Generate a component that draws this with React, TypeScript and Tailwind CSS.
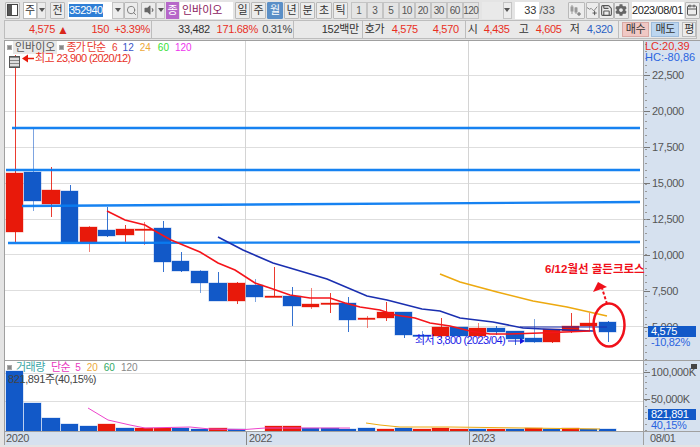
import { Calendar, Save, Search } from "lucide-react";
import { FaCog, FaVolumeDown } from "react-icons/fa";

const RED = "#e8190a";
const BLUE = "#1259c8";

// left, right, body top, body bottom, wick top, wick bottom, up?
const candles: [number, number, number, number, number, number, boolean][] = [
  [6, 23, 173, 232, 55, 242, true],
  [24, 41, 172, 201, 129, 211, false],
  [42, 60, 190, 204, 167, 217, true],
  [61, 78, 191, 242, 185, 242, false],
  [80, 97, 227, 242, 226, 252, true],
  [98, 115, 230, 236, 207, 237, false],
  [116, 134, 229, 235, 225, 242, true],
  [135, 153, 229, 230, 222, 245, true],
  [154, 171, 228, 262, 221, 272, false],
  [172, 189, 261, 271, 252, 272, false],
  [191, 208, 271, 283, 270, 293, false],
  [209, 227, 283, 301, 272, 301, false],
  [228, 245, 283, 301, 282, 304, true],
  [246, 263, 285, 297, 279, 302, false],
  [265, 282, 296, 297, 267, 297, true],
  [283, 301, 296, 306, 287, 326, false],
  [302, 319, 304, 307, 288, 309, true],
  [321, 339, 303, 304, 293, 313, true],
  [339, 356, 303, 320, 297, 332, false],
  [358, 375, 318, 319, 316, 328, true],
  [377, 394, 312, 318, 302, 321, true],
  [395, 412, 312, 335, 312, 338, false],
  [413, 431, 335, 336, 331, 336, false],
  [432, 449, 327, 336, 318, 338, true],
  [450, 468, 327, 336, 327, 337, false],
  [469, 486, 328, 336, 323, 339, true],
  [487, 505, 328, 332, 326, 335, false],
  [506, 524, 331, 339, 331, 345, false],
  [525, 542, 338, 342, 319, 343, false],
  [543, 560, 329, 342, 329, 343, true],
  [562, 579, 326, 331, 313, 333, true],
  [580, 597, 323, 326, 313, 330, true],
  [599, 616, 322, 332, 321, 342, false],
];

// left, right, top, up?
const volumes: [number, number, number, boolean][] = [
  [6, 23, 371, false],
  [24, 41, 403, false],
  [42, 60, 418, false],
  [61, 78, 424, false],
  [80, 97, 426, false],
  [98, 115, 424, true],
  [116, 134, 428, false],
  [135, 153, 428, true],
  [154, 171, 428, true],
  [172, 189, 428, false],
  [191, 208, 429, false],
  [209, 227, 428, true],
  [228, 245, 429, false],
  [265, 282, 426, true],
  [283, 301, 426, true],
  [302, 319, 428, false],
  [321, 339, 428, false],
  [339, 356, 429, false],
  [358, 375, 428, false],
  [377, 394, 429, true],
  [395, 412, 428, false],
  [413, 431, 429, true],
  [432, 449, 428, true],
  [450, 468, 429, true],
  [469, 486, 429, false],
  [487, 505, 429, true],
  [506, 524, 429, false],
  [525, 542, 428, true],
  [543, 560, 429, false],
  [562, 579, 428, true],
  [580, 597, 429, false],
  [599, 616, 429, false],
];

const ma6 =
  "107,211 125,220 145,225 155,231 171,240 200,252 218,263 235,270 255,283 270,288 290,295 310,298 330,298 345,303 360,307 380,310 395,315 415,318 430,323 450,326 470,331 490,334 510,334 540,333 590,331";
const ma12 =
  "218,237 243,250 273,263 290,268 327,279 367,296 387,300 422,309 440,311 460,318 493,322 523,328 543,329 593,331";
const ma24 = "440,274 460,282 497,292 533,301 567,307 607,316";

function Btn({ w, ml = 0, active, children }: { w: string; ml?: number; active?: boolean; children?: React.ReactNode }) {
  return (
    <div
      className={`${w} h-[17px] flex items-center justify-center border rounded-[1px] text-[11px] ${
        active ? "bg-[#5b8fc7] border-[#5b8fc7] text-white" : "bg-[#ececec] border-[#b9b9b9] text-[#333]"
      }`}
      style={{ marginLeft: ml }}
    >
      {children}
    </div>
  );
}

function Caret({ w }: { w: string }) {
  return (
    <div className={`${w} h-[17px] flex items-center justify-center bg-[#ececec] border border-[#c4c4c4]`}>
      <div className="w-0 h-0 border-x-[3px] border-x-transparent border-t-[4px] border-t-[#555]" />
    </div>
  );
}

function Toolbar() {
  return (
    <div className="h-[20px] flex items-center pl-[5px] bg-[#e4e4e4]">
      <Btn w="w-[15px]">
        <svg width="11" height="12" viewBox="0 0 11 12">
          <rect x="0.5" y="0.5" width="10" height="11" fill="#fff" stroke="#444" />
          <rect x="1" y="1" width="4" height="10" fill="#555" />
        </svg>
      </Btn>
      <div className="ml-[3px] w-[14px] h-[17px] bg-white border border-[#b9b9b9] flex items-center justify-center text-[11px] text-[#333]">주</div>
      <Caret w="w-[9px]" />
      <Btn w="w-[15px]" ml={4}>전</Btn>
      <div className="ml-[3px] w-[44px] h-[17px] bg-white flex items-center pl-[1px]">
        <span className="bg-[#2f7fd6] text-white text-[11px] leading-[13px] tracking-[-0.5px]">352940</span>
      </div>
      <Caret w="w-[12px]" />
      <Btn w="w-[14px]"><Search size={11} className="text-[#777]" /></Btn>
      <Btn w="w-[15px]" ml={3}><FaVolumeDown size={12} className="text-[#666]" /></Btn>
      <Caret w="w-[9px]" />
      <div className="ml-[1px] w-[13px] h-[17px] bg-[#b667c9] text-white text-[11px] flex items-center justify-center">종</div>
      <div className="ml-[1px] w-[53px] h-[17px] bg-white text-[#8b1a5e] text-[11px] flex items-center pl-[2px]">인바이오</div>
      <Btn w="w-[15px]" ml={2}>일</Btn>
      <Btn w="w-[15px]" ml={1}>주</Btn>
      <Btn w="w-[16px]" ml={1} active>월</Btn>
      <Btn w="w-[15px]" ml={1}>년</Btn>
      <Btn w="w-[15px]" ml={1}>분</Btn>
      <Btn w="w-[16px]" ml={1}>초</Btn>
      <Btn w="w-[15px]" ml={1}>틱</Btn>
      {["1", "3", "5", "10", "20", "30", "60", "120"].map((n, i) => (
        <div
          key={n}
          className="w-[15.5px] h-[17px] flex items-center justify-center bg-[#e4e4e4] border border-[#c4c4c4] text-[10px] tracking-[-0.5px] text-[#555]"
          style={{ marginLeft: i === 0 ? 3 : 0.5 }}
        >
          {n}
        </div>
      ))}
      <div className="ml-[3px] w-[21px] h-[17px] bg-[#e9e9e9]" />
      <Caret w="w-[9px]" />
      <div className="ml-[3px] w-[24px] h-[17px] bg-white flex items-center justify-end pr-[2px] text-[11px] text-[#333]">33</div>
      <span className="ml-[1px] w-[28px] text-[11px] text-[#555]">/33</span>
      <Btn w="w-[17px]">
        <svg width="14" height="13" viewBox="0 0 14 13" stroke="#999" fill="#999">
          <path d="M3 1v9M7 3v7" />
          <rect x="2" y="3" width="2" height="4" />
          <rect x="6" y="4" width="2" height="4" />
          <path d="M10 8v4M8 10h4" stroke="#666" />
        </svg>
      </Btn>
      <Btn w="w-[13px]" ml={1}>
        <svg width="13" height="13" viewBox="0 0 13 13" fill="none" stroke="#777">
          <path d="M0 3l3 2 2-1 3 3 4-5" />
          <path d="M9 7v5M6.5 9.5h5" stroke="#444" />
        </svg>
      </Btn>
      <Btn w="w-[15px]"><Save size={13} className="text-[#555]" /></Btn>
      <Btn w="w-[15px]"><FaCog size={12} className="text-[#666]" /></Btn>
      <div className="ml-[3px] w-[52px] h-[17px] bg-white flex items-center justify-center text-[11px] tracking-[-0.4px] text-[#222]">2023/08/01</div>
      <Btn w="w-[15px]" ml={1}><Calendar size={12} className="text-[#555]" /></Btn>
    </div>
  );
}

function Cell({ w, className = "", children }: { w: string; className?: string; children?: React.ReactNode }) {
  return <span className={`${w} shrink-0 text-right whitespace-nowrap ${className}`}>{children}</span>;
}

function Label({ ml, w, children }: { ml: string; w: string; children: React.ReactNode }) {
  return <span className={`${ml} ${w} shrink-0 whitespace-nowrap text-[#333] text-[11px]`}>{children}</span>;
}

function InfoBar() {
  return (
    <div className="h-[19px] ml-[4px] mr-[3px] flex items-center bg-[#e9e9e9] text-[11px] tracking-[-0.3px] border border-[#bdbdbd]">
      <Cell w="w-[50px]" className="text-[#e8301f]">4,575</Cell>
      <span className="ml-[2px] w-[11px] text-[#d9271a] text-[12px]">▲</span>
      <Cell w="w-[41px]" className="text-[#e8301f]">150</Cell>
      <Cell w="w-[41px]" className="text-[#e8301f]">+3.39%</Cell>
      <div className="ml-[1px] w-px h-full bg-[#bdbdbd]" />
      <Cell w="w-[58px]" className="text-[#333]">33,482</Cell>
      <Cell w="w-[48px]" className="text-[#e8301f]">171.68%</Cell>
      <Cell w="w-[34px]" className="text-[#444]">0.31%</Cell>
      <div className="ml-[1px] w-px h-full bg-[#bdbdbd]" />
      <Cell w="w-[65px]" className="text-[#333]">152백만</Cell>
      <div className="ml-[3px] w-px h-full bg-[#bdbdbd]" />
      <Label ml="ml-[2px]" w="w-[21px]">호가</Label>
      <Cell w="w-[32px]" className="text-[#e8301f]">4,575</Cell>
      <Cell w="w-[41px]" className="text-[#e8301f]">4,570</Cell>
      <div className="ml-[6px] w-px h-full bg-[#bdbdbd]" />
      <Label ml="ml-[2px]" w="w-[10px]">시</Label>
      <Cell w="w-[32px]" className="text-[#e8301f]">4,435</Cell>
      <Label ml="ml-[9px]" w="w-[10px]">고</Label>
      <Cell w="w-[33px]" className="text-[#e8301f]">4,605</Cell>
      <Label ml="ml-[8px]" w="w-[10px]">저</Label>
      <Cell w="w-[33px]" className="text-[#2a5fc4]">4,320</Cell>
      <div className="ml-[5px] w-px h-full bg-[#bdbdbd]" />
      <div className="ml-[3px] w-[30px] h-[15px] bg-[#f0c8c4] border border-[#d8a8a4] flex items-center justify-center text-[11px] text-[#333]">매수</div>
      <div className="ml-[2px] w-[30px] h-[15px] bg-[#bcd6f0] border border-[#9fbcdb] flex items-center justify-center text-[11px] text-[#333]">매도</div>
      <div className="ml-[3px] w-[15px] h-[15px] bg-[#ececec] border border-[#bdbdbd] flex items-center justify-center text-[11px] text-[#333]">평</div>
    </div>
  );
}

function GridLines({ ys, y1, y2 }: { ys: number[]; y1: number; y2: number }) {
  return (
    <g shapeRendering="crispEdges">
      {ys.map((y) => (
        <line key={y} x1={5} x2={643} y1={y} y2={y} stroke="#dedede" />
      ))}
      <line x1={245.5} x2={245.5} y1={y1} y2={y2} stroke="#d4d4d4" />
      <line x1={468.5} x2={468.5} y1={y1} y2={y2} stroke="#d4d4d4" />
    </g>
  );
}

function PricePane() {
  return (
    <div className="relative h-[319px] bg-white">
      <svg width="638" height="319" viewBox="5 41 638 319" className="block">
        <GridLines ys={[75, 111, 147, 183, 219, 254, 290, 326]} y1={41} y2={360} />
        {candles.map(([l, r, t, b, wt, wb, up], i) => {
          const c = up ? RED : BLUE;
          const mid = Math.round((l + r) / 2) + 0.5;
          const h = Math.max(b - t, 1.5);
          return (
            <g key={i}>
              <line x1={mid} x2={mid} y1={wt} y2={wb} stroke={c} strokeOpacity={i % 3 === 1 ? 0.55 : 0.85} />
              <rect x={l} y={t} width={r - l} height={h} fill={c} stroke={c} strokeOpacity={0.35} />
            </g>
          );
        })}
        <g stroke="#0a7bf0" strokeWidth="2.4" strokeOpacity="0.95">
          <line x1={12} x2={640} y1={128} y2={128} />
          <line x1={6} x2={640} y1={170} y2={170} />
          <line x1={22} x2={640} y1={206} y2={202} />
          <line x1={8} x2={640} y1={243} y2={242} />
        </g>
        <polyline points={ma24} fill="none" stroke="#eda90f" strokeWidth="1.6" />
        <polyline points={ma12} fill="none" stroke="#1a2fb0" strokeWidth="1.6" />
        <polyline points={ma6} fill="none" stroke="#f5141a" strokeWidth="1.6" />
        <line x1={520} x2={607} y1={327} y2={327} stroke="#1a2fb0" strokeWidth="1" />
        <ellipse cx={609} cy={325} rx={15.5} ry={21.5} fill="none" stroke="#f0101a" strokeWidth="2.5" />
        <line x1={607} x2={602} y1={304} y2={288} stroke="#f0101a" strokeWidth="2" strokeDasharray="3 2" />
        <polygon points="593,292 598,282 607,287" fill="#f0101a" />
        <line x1={508} x2={522} y1={341} y2={341} stroke="#1616e0" />
        <polygon points="520,338 525,341 520,344" fill="#1616e0" />
        <line x1={24} x2={34} y1={58.5} y2={58.5} stroke={RED} strokeWidth="1.5" />
        <polygon points="28,54.5 22,58.5 28,62.5" fill={RED} />
      </svg>

      <div className="absolute left-[3px] top-0 flex items-center text-[11px] leading-[13px] whitespace-nowrap">
        <span className="w-[3px] h-[3px] bg-[#888] outline outline-1 outline-[#aaa]" />
        <span className="ml-[2px] px-[2px] bg-[#e8e8e8] text-[#555]">인바이오</span>
        <span className="ml-[3px] w-[3px] h-[3px] bg-[#888] outline outline-1 outline-[#aaa]" />
        <span className="ml-[3px] text-[#e83a30] tracking-[-1px]">종가 단순</span>
        <span className="ml-[7px] text-[10px] text-[#e83a30]">6</span>
        <span className="ml-[5px] text-[10px] text-[#3a54c8]">12</span>
        <span className="ml-[6px] text-[10px] text-[#eda93a]">24</span>
        <span className="ml-[7px] text-[10px] text-[#33e033]">60</span>
        <span className="ml-[6px] text-[10px] text-[#ee33ee]">120</span>
      </div>
      <div className="absolute left-[4px] top-[15px] w-[11px] h-[12px] bg-[#ddd] border border-[#555] [background-image:repeating-linear-gradient(0deg,#888_0_1px,transparent_1px_3px)]" />
      <span className="absolute left-[30px] top-[10px] text-[11px] tracking-[-0.6px] leading-[14px] text-[#e8301f] whitespace-nowrap">최고 23,900 (2020/12)</span>
      <span className="absolute left-[410px] top-[292px] text-[11px] tracking-[-0.6px] leading-[14px] text-[#1a1ae8] whitespace-nowrap">최저 3,800 (2023/04)</span>
      <span className="absolute z-10 left-[540px] top-[221px] text-[11.5px] font-bold leading-[14px] text-[#f0101a] whitespace-nowrap">6/12월선 골든크로스</span>
    </div>
  );
}

function VolumePane() {
  return (
    <div className="relative h-[71px] bg-white border-t border-[#a0a0a0]">
      <svg width="638" height="70" viewBox="5 361 638 70" className="block">
        <GridLines ys={[373, 401]} y1={361} y2={431} />
        {volumes.map(([l, r, t, up], i) => (
          <rect key={i} x={l} y={t} width={r - l} height={431 - t} fill={up ? RED : BLUE} stroke={up ? RED : BLUE} strokeOpacity={0.3} />
        ))}
        <polyline points="88,408 108,420 130,425 145,428 190,427 210,429 245,429.5 265,428 350,428" fill="none" stroke="#ee44cc" strokeWidth="1" />
        <polyline points="366,423 380,425 400,427 450,427 600,429" fill="none" stroke="#eda90f" strokeWidth="1" />
      </svg>
      <div className="absolute left-[3px] top-0 flex items-center text-[11px] leading-[13px] whitespace-nowrap">
        <span className="w-[3px] h-[3px] bg-[#888] outline outline-1 outline-[#aaa]" />
        <span className="ml-[5px] text-[#3aa6a6] tracking-[-0.5px]">거래량</span>
        <span className="ml-[6px] text-[#e83ac0] tracking-[-0.5px]">단순</span>
        <span className="ml-[5px] text-[10px] text-[#e83ac0]">5</span>
        <span className="ml-[6px] text-[10px] text-[#eda93a]">20</span>
        <span className="ml-[6px] text-[10px] text-[#33a866]">60</span>
        <span className="ml-[6px] text-[10px] text-[#888]">120</span>
      </div>
      <span className="absolute left-[3px] top-[11px] text-[11px] tracking-[-0.4px] leading-[14px] text-[#444] whitespace-nowrap">821,891주(40,15%)</span>
    </div>
  );
}

function PriceAxis() {
  const labels = ["22,500", "20,000", "17,500", "15,000", "12,500", "10,000", "7,500", "5,000"];
  return (
    <div className="relative h-[319px] pt-[16px] bg-[#d6e1ef] text-[11px] tracking-[-0.3px] text-[#555]">
      <div className="absolute left-[1px] top-0 bottom-0 w-[2px] [background-image:repeating-linear-gradient(0deg,#999_0_1px,transparent_1px_7px)]" />
      <div className="absolute left-[1px] top-0 text-[11px] leading-[11px] whitespace-nowrap tracking-normal">
        <div className="text-[#e8301f]">LC:20,39</div>
        <div className="text-[#2a64e0]">HC:-80,86</div>
      </div>
      {labels.map((l) => (
        <div key={l} className="h-[36px] flex items-center">
          <span className="w-[6px] h-px bg-[#777]" />
          <span className="ml-[2px]">{l}</span>
        </div>
      ))}
      <div className="absolute left-[4px] top-[285px] w-[48px] h-[11px] bg-[#1259c8] text-white leading-[11px] pl-[3px]">4,575</div>
      <span className="absolute left-[7px] top-[294px] text-[#2a64e0] leading-[14px] whitespace-nowrap">-10,82%</span>
    </div>
  );
}

function VolumeAxis() {
  return (
    <div className="relative h-[71px] bg-[#d6e1ef] border-t border-[#a0a0a0] text-[11px] tracking-[-0.3px] text-[#555]">
      <div className="absolute left-[1px] top-0 bottom-0 w-[2px] [background-image:repeating-linear-gradient(0deg,#999_0_1px,transparent_1px_6px)]" />
      <div className="absolute right-[3px] top-[3px] w-[6px] h-[5px] bg-[#444]" />
      <div className="pt-[5px] h-[33px] flex items-start">
        <span className="mt-[6px] w-[6px] h-px bg-[#777]" />
        <span className="ml-[1px] leading-[13px]">100,000K</span>
      </div>
      <div className="h-[12px] flex items-center -mt-[1px]">
        <span className="w-[6px] h-px bg-[#777]" />
        <span className="ml-[1px]">50,000K</span>
      </div>
      <div className="absolute left-[4px] top-[48px] w-[48px] h-[11px] bg-[#1259c8] text-white leading-[11px] pl-[3px]">821,891</div>
      <span className="absolute left-[7px] top-[58px] text-[#2a64e0] leading-[13px]">40,15%</span>
    </div>
  );
}

export default function App() {
  return (
    <div className="w-[700px] h-[447px] overflow-hidden bg-[#e4e4e4] font-['Liberation_Sans','Noto_Sans_CJK_KR',sans-serif]">
      <Toolbar />
      <InfoBar />
      <div className="mt-[1px] flex">
        <div className="w-[4px]" />
        <div className="relative z-10 w-[639px] border-l border-t border-[#a0a0a0]">
          <PricePane />
          <VolumePane />
          <div className="relative h-[14px] bg-[#d6e1ef] border-t border-[#a0a0a0] text-[11px] tracking-[-0.4px] leading-[13px] text-[#555]">
            <div className="flex h-full">
              <span className="w-[241px] pl-[1px] shrink-0">2020</span>
              <span className="w-[223px] pl-[2px] border-l border-[#888] shrink-0">2022</span>
              <span className="pl-[2px] border-l border-[#888]">2023</span>
            </div>
          </div>
        </div>
        <div className="w-[57px] border-l border-t border-[#a0a0a0]">
          <PriceAxis />
          <VolumeAxis />
          <div className="h-[14px] bg-[#d6e1ef] border-t border-[#a0a0a0] text-[11px] tracking-[-0.4px] leading-[13px] pl-[6px] text-[#555]">08/01</div>
        </div>
      </div>
    </div>
  );
}
